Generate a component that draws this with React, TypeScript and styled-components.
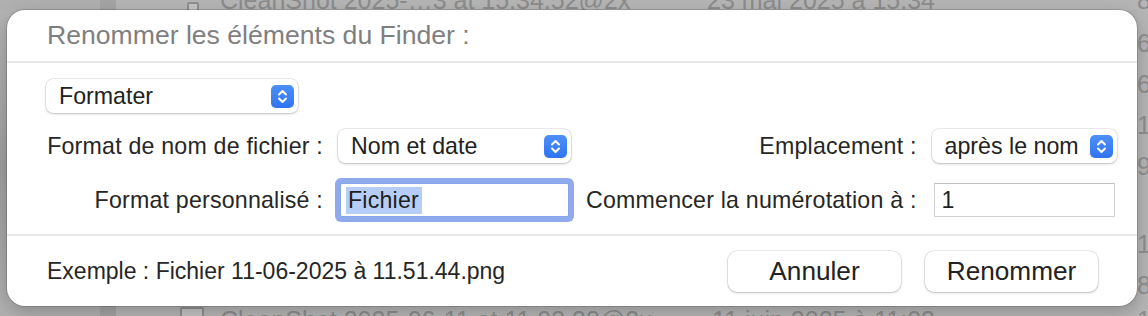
import React from "react";
import styled, { createGlobalStyle } from "styled-components";

const GlobalStyle = createGlobalStyle`
  html, body {
    margin: 0;
    padding: 0;
  }
  body {
    width: 1148px;
    height: 316px;
    overflow: hidden;
    background: #b3b3b3;
    font-family: "Liberation Sans", Arial, sans-serif;
    -webkit-font-smoothing: antialiased;
  }
`;

const Screen = styled.div`
  width: 1148px;
  height: 316px;
  display: flex;
  flex-direction: column;
  overflow: hidden;
`;

const FinderRow = styled.div<{ $edge: "top" | "bottom" }>`
  height: 10px;
  flex: none;
  overflow: hidden;
  display: grid;
  grid-template-columns: 180px 26px 14px 470px 245px 202px 11px;
  align-items: ${(p) => (p.$edge === "top" ? "end" : "start")};
  background: linear-gradient(
    90deg,
    #b0b0b0 0,
    #b0b0b0 100px,
    #a4a4a4 100px,
    #a4a4a4 116px,
    #b5b5b5 116px
  );
  color: #8c8c8c;
  font-size: 25px;
  line-height: 26px;
  white-space: nowrap;
`;

const RowText = styled.span<{ $edge: "top" | "bottom"; $align?: string }>`
  margin-bottom: ${(p) => (p.$edge === "top" ? "-3px" : "0")};
  margin-top: ${(p) => (p.$edge === "bottom" ? "1px" : "0")};
  text-align: ${(p) => p.$align || "left"};
  overflow: hidden;
`;

const DocIcon = styled.span<{ $edge: "top" | "bottom" }>`
  display: block;
  width: ${(p) => (p.$edge === "top" ? "12px" : "24px")};
  height: 28px;
  margin-left: ${(p) => (p.$edge === "top" ? "7px" : "0")};
  margin-bottom: ${(p) => (p.$edge === "top" ? "-20px" : "0")};
  margin-top: ${(p) => (p.$edge === "bottom" ? "1px" : "0")};
  border: 2px solid #8f8f8f;
  border-radius: 2px;
  background: #c4c4c4;
  box-sizing: border-box;
`;

const Middle = styled.div`
  display: flex;
  height: 296px;
  flex: none;
`;

const LeftStrip = styled.div`
  width: 7px;
  flex: none;
  background: linear-gradient(
    180deg,
    #b3b3b3 0,
    #a9a9a9 90px,
    #9f9f9f 160px,
    #a9a9a9 240px,
    #b0b0b0 296px
  );
`;

const RightStrip = styled.div`
  width: 11px;
  flex: none;
  display: flex;
  flex-direction: column;
  padding-top: 13px;
  box-sizing: border-box;
  background: #b5b5b5;
  overflow: hidden;
`;

const SizeDigit = styled.span`
  height: 41px;
  line-height: 41px;
  font-size: 25px;
  color: #8f8f8f;
  white-space: nowrap;
`;

const Sheet = styled.div`
  width: 1130px;
  height: 296px;
  flex: none;
  position: relative;
  z-index: 1;
  background: #ffffff;
  border-radius: 18px;
  box-shadow: 0 0 0 1px rgba(0, 0, 0, 0.14), 0 6px 18px rgba(0, 0, 0, 0.22);
  display: flex;
  flex-direction: column;
  color: #262626;
`;

const Header = styled.div`
  height: 51px;
  flex: none;
  display: flex;
  align-items: center;
  padding-left: 40px;
  border-bottom: 2px solid #e8e8e8;
`;

const Title = styled.h1`
  margin: 0;
  font-weight: 400;
  font-size: 26.6px;
  color: #7f7f7f;
`;

const Body = styled.div`
  display: flex;
  flex-direction: column;
  padding: 16px 21px 17px 39px;
  gap: 16px;
`;

const Grid = styled.div`
  display: grid;
  grid-template-columns: 277px 233px 1fr 185px;
  grid-auto-rows: 34px;
  column-gap: 15px;
  row-gap: 20px;
  align-items: center;
`;

const Label = styled.span`
  font-size: 23.2px;
  letter-spacing: 0.2px;
  text-align: right;
  white-space: nowrap;
  color: #262626;
`;

const Popup = styled.div<{ $width?: number }>`
  width: ${(p) => (p.$width ? `${p.$width}px` : "auto")};
  height: 34px;
  box-sizing: border-box;
  display: flex;
  align-items: center;
  justify-content: space-between;
  padding: 0 4px 0 13px;
  background: #ffffff;
  border-radius: 7px;
  box-shadow: 0 0 0 0.5px rgba(0, 0, 0, 0.14), 0 1px 2.5px rgba(0, 0, 0, 0.2);
  font-size: 23.2px;
  color: #222;
  white-space: nowrap;
`;

const Stepper = styled.span`
  width: 23px;
  height: 23px;
  flex: none;
  border-radius: 5px;
  background: linear-gradient(180deg, #4d90fa 0%, #2f74ef 100%);
  display: flex;
  align-items: center;
  justify-content: center;
`;

const TextField = styled.div<{ $focused?: boolean }>`
  height: 34px;
  margin: 0 2px;
  box-sizing: border-box;
  display: flex;
  align-items: center;
  padding-left: ${(p) => (p.$focused ? "5px" : "7px")};
  background: #ffffff;
  border: 1px solid ${(p) => (p.$focused ? "#86a5ec" : "#d2d2d2")};
  border-top-color: ${(p) => (p.$focused ? "#86a5ec" : "#c2c2c2")};
  border-radius: ${(p) => (p.$focused ? "2px" : "0")};
  box-shadow: ${(p) => (p.$focused ? "0 0 0 5px #8fabee" : "none")};
  font-size: 23.2px;
  color: #1e1e1e;
`;

const Selected = styled.span`
  background: #b6cef7;
  line-height: 27px;
  padding: 0 3px 0 2px;
  letter-spacing: 0.2px;
`;

const Footer = styled.div`
  flex: 1;
  display: flex;
  align-items: center;
  justify-content: space-between;
  padding: 0 39px 0 40px;
  border-top: 2px solid #e8e8e8;
`;

const Example = styled.span`
  font-size: 23px;
  color: #262626;
`;

const Buttons = styled.div`
  display: flex;
  gap: 24px;
`;

const Button = styled.button`
  width: 173px;
  height: 41px;
  border: none;
  border-radius: 9px;
  background: #ffffff;
  box-shadow: 0 0 0 0.5px rgba(0, 0, 0, 0.14), 0 1px 2.5px rgba(0, 0, 0, 0.2);
  font-family: inherit;
  font-size: 26.2px;
  color: #222;
  padding: 0;
`;

function Chevrons() {
  return (
    <svg width="23" height="23" viewBox="0 0 23 23">
      <path
        d="M8 9.5 L11.5 6 L15 9.5 M8 13.5 L11.5 17 L15 13.5"
        fill="none"
        stroke="#ffffff"
        strokeWidth="2"
        strokeLinecap="round"
        strokeLinejoin="round"
      />
    </svg>
  );
}

function Select({ value, width }: { value: string; width?: number }) {
  return (
    <Popup $width={width}>
      <span>{value}</span>
      <Stepper>
        <Chevrons />
      </Stepper>
    </Popup>
  );
}

const sizes = ["6", "6", "1", "9", "", "1", "8"];

export default function App() {
  return (
    <>
      <GlobalStyle />
      <Screen>
        <FinderRow $edge="top">
          <span />
          <DocIcon $edge="top" />
          <span />
          <RowText $edge="top">CleanShot 2025-…3 at 15.34.52@2x</RowText>
          <RowText $edge="top" $align="right">
            23 mai 2025 à 15:34
          </RowText>
          <span />
          <RowText $edge="top">8</RowText>
        </FinderRow>

        <Middle>
          <LeftStrip />
          <Sheet>
            <Header>
              <Title>Renommer les éléments du Finder :</Title>
            </Header>
            <Body>
              <Select value="Formater" width={252} />
              <Grid>
                <Label>Format de nom de fichier :</Label>
                <Select value="Nom et date" />
                <Label>Emplacement :</Label>
                <Select value="après le nom" />

                <Label>Format personnalisé :</Label>
                <TextField $focused>
                  <Selected>Fichier</Selected>
                </TextField>
                <Label>Commencer la numérotation à :</Label>
                <TextField>1</TextField>
              </Grid>
            </Body>
            <Footer>
              <Example>Exemple : Fichier 11-06-2025 à 11.51.44.png</Example>
              <Buttons>
                <Button>Annuler</Button>
                <Button>Renommer</Button>
              </Buttons>
            </Footer>
          </Sheet>
          <RightStrip>
            {sizes.map((s, i) => (
              <SizeDigit key={i}>{s}</SizeDigit>
            ))}
          </RightStrip>
        </Middle>

        <FinderRow $edge="bottom">
          <span />
          <DocIcon $edge="bottom" />
          <span />
          <RowText $edge="bottom">CleanShot 2025-06-11 at 11.03.38@2x</RowText>
          <RowText $edge="bottom" $align="right">
            11 juin 2025 à 11:03
          </RowText>
          <span />
          <RowText $edge="bottom">1</RowText>
        </FinderRow>
      </Screen>
    </>
  );
}
